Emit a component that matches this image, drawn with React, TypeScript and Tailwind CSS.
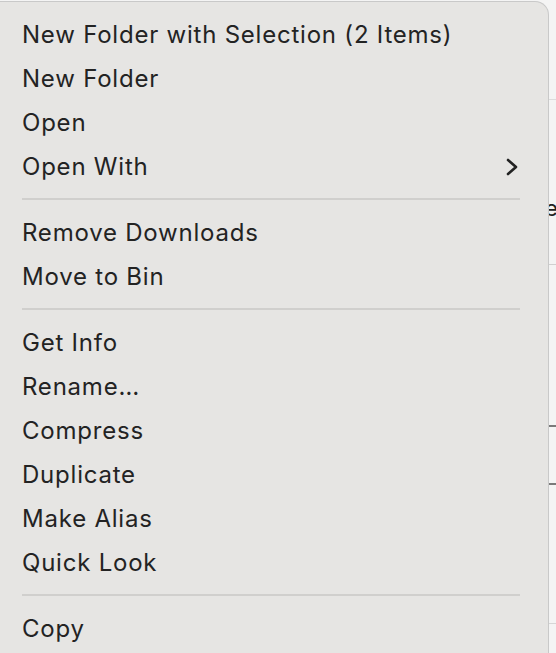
import React from "react";

type Entry = { label: string; sub?: boolean } | "sep";

const entries: Entry[] = [
  { label: "New Folder with Selection (2 Items)" },
  { label: "New Folder" },
  { label: "Open" },
  { label: "Open With", sub: true },
  "sep",
  { label: "Remove Downloads" },
  { label: "Move to Bin" },
  "sep",
  { label: "Get Info" },
  { label: "Rename…" },
  { label: "Compress" },
  { label: "Duplicate" },
  { label: "Make Alias" },
  { label: "Quick Look" },
  "sep",
  { label: "Copy" },
];

export default function App() {
  return (
    <div
      className="w-[556px] h-[653px] overflow-hidden flex bg-[#f4f4f4]"
      style={{ fontFamily: "Inter, 'Noto Sans', sans-serif" }}
    >
      <div className="w-[549px] shrink-0 mt-[1px] h-[700px] bg-[#e6e5e3] rounded-tr-[14px] border-t border-r border-[#c9c9c9] pt-[11px] flex flex-col">
        {entries.map((e, i) =>
          e === "sep" ? (
            <div key={i} className="h-[22px] pt-[9px] pl-[22px] pr-[28px]">
              <div className="h-[2px] w-full bg-[#d0cfcd]" />
            </div>
          ) : (
            <div
              key={i}
              className="h-[44px] flex items-center justify-between pl-[22px] pr-[33px] text-[24px] text-[#232323] tracking-[0.78px]"
            >
              <span>{e.label}</span>
              {e.sub && (
                <svg width="14" height="20" viewBox="0 0 14 20" className="mr-[-4px]">
                  <path d="M3 3 L11 10 L3 17" fill="none" stroke="#222" strokeWidth="2.6" strokeLinecap="round" strokeLinejoin="round" />
                </svg>
              )}
            </div>
          )
        )}
      </div>
      <div className="flex-1 flex flex-col relative overflow-hidden">
        <div className="h-[99px]" />
        <div className="h-[1px] bg-[#dcdcdc]" />
        <div className="h-[98px]" />
        <div className="h-[20px] text-[22px] leading-[20px] text-[#222] -ml-[4px] whitespace-nowrap">eN</div>
        <div className="h-[46px]" />
        <div className="h-[1px] bg-[#d0d0d0]" />
        <div className="h-[160px]" />
        <div className="h-[2px] bg-[#7a7a7a]" />
        <div className="h-[56px]" />
        <div className="h-[2px] bg-[#7a7a7a]" />
        <div className="h-[138px]" />
        <div className="h-[1px] bg-[#d6d6d6]" />
      </div>
    </div>
  );
}
